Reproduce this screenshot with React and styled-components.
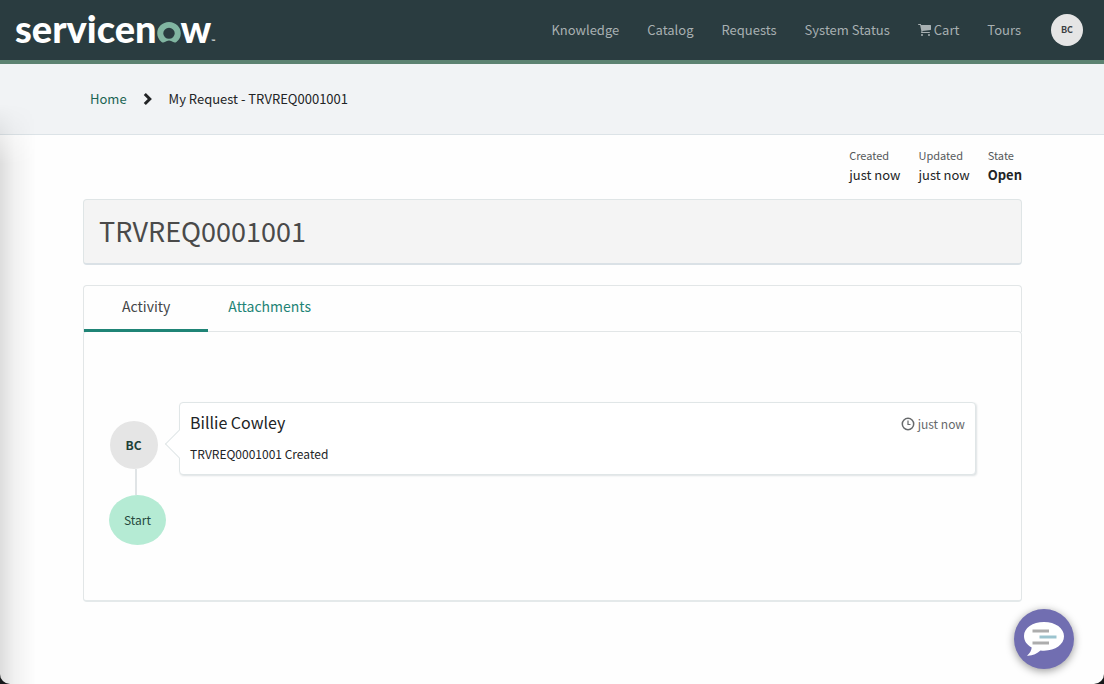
import React from "react";
import styled, { createGlobalStyle } from "styled-components";

const GlobalStyle = createGlobalStyle`
  *, *::before, *::after { box-sizing: border-box; }
  body {
    margin: 0;
    background: #17191b;
    color: #222426;
    font-family: "Source Sans Pro", "Noto Sans CJK SC", "Noto Sans", sans-serif;
    font-size: 13px;
    line-height: 20px;
  }
  h1, h2, p, dl, dd, ol { margin: 0; padding: 0; font-weight: 400; }
  button { font: inherit; border: 0; padding: 0; cursor: pointer; }
  a { text-decoration: none; }
`;

const Page = styled.div`
  position: relative;
  display: flex;
  flex-direction: column;
  min-height: 100vh;
  overflow: hidden;
  border-radius: 0 0 10px 10px;
  background: #fefefe;
`;

const EdgeShade = styled.div`
  position: absolute;
  top: 104px;
  bottom: 0;
  left: 0;
  width: 36px;
  pointer-events: none;
  background: linear-gradient(to right, rgba(0, 0, 0, 0.13), rgba(0, 0, 0, 0.05) 40%, transparent);
  mask-image: linear-gradient(to bottom, transparent, #000 60px);
`;

const Header = styled.header`
  display: flex;
  align-items: center;
  justify-content: space-between;
  height: 64px;
  padding: 0 21px 0 15px;
  background: #2a3c40;
  border-bottom: 4px solid #5c8271;
`;

const Logo = styled.a`
  display: flex;
  align-items: baseline;
  padding-bottom: 4px;
  color: #fff;
  font-family: Lato, sans-serif;
  font-size: 38px;
  font-weight: 900;
  line-height: 56px;
`;

const Trademark = styled.span`
  font-size: 5px;
  line-height: 8px;
`;

const Nav = styled.nav`
  display: flex;
  align-items: center;
  gap: 28px;
`;

const NavLink = styled.a`
  display: flex;
  align-items: center;
  gap: 3px;
  color: #a8b0b2;
`;

const Avatar = styled.span`
  display: flex;
  align-items: center;
  justify-content: center;
  flex: none;
  width: ${(p) => p.$size}px;
  height: ${(p) => p.$size}px;
  border-radius: 50%;
  background: #e5e5e5;
  color: ${(p) => p.$color};
  font-size: ${(p) => (p.$size > 40 ? 12 : 9)}px;
  font-weight: 700;
`;

const AvatarButton = styled.button`
  margin-left: 2px;
  border-radius: 50%;
  background: none;
`;

const BreadcrumbBar = styled.nav`
  padding: 25px 90px;
  background: #f1f3f5;
  border-bottom: 1px solid #dce3e7;
`;

const Breadcrumbs = styled.ol`
  display: flex;
  align-items: center;
  gap: 16px;
  list-style: none;

  li { display: flex; }
  a { color: #1b6453; }
`;

const Content = styled.main`
  display: flex;
  flex-direction: column;
  padding: 12px 82px 40px 83px;
`;

const Meta = styled.dl`
  display: flex;
  justify-content: flex-end;
  gap: 18px;
  margin-bottom: 14px;
`;

const MetaItem = styled.div`
  dt { padding-bottom: 2px; color: #55595b; font-size: 11px; line-height: 16px; }
  dd { font-size: 13px; line-height: 20px; font-weight: ${(p) => (p.$strong ? 700 : 400)}; }
`;

const TitleBox = styled.div`
  margin-bottom: 20px;
  padding: 11px 15px 13px;
  background: #f4f4f4;
  border: 1px solid #dfe5e6;
  border-bottom: 2px solid #dae1e6;
  border-radius: 4px;
`;

const Title = styled.h1`
  color: #4a4a4a;
  font-size: 27px;
  line-height: 39px;
`;

const Tabs = styled.div`
  display: flex;
  position: relative;
  border: 1px solid #e2e6e7;
  border-bottom: 0;
  border-radius: 4px 4px 0 0;
`;

const Tab = styled.button`
  height: 46px;
  padding: 0 ${(p) => (p.$active ? 38 : 20)}px 3px;
  background: none;
  border-bottom: 3px solid ${(p) => (p.$active ? "#1f8476" : "transparent")};
  color: ${(p) => (p.$active ? "#444648" : "#1f8476")};
  font-size: 14px;
`;

const Panel = styled.section`
  margin-top: -1px;
  padding: 70px 45px 55px 25px;
  border: 1px solid #e2e6e7;
  border-bottom: 2px solid #e4e9ea;
  border-radius: 4px;
`;

const Entry = styled.article`
  display: flex;
  gap: 13px;
`;

const Track = styled.div`
  display: flex;
  flex-direction: column;
  align-items: center;
  width: 57px;
  padding-top: 19px;
`;

const TrackAvatar = styled.div`
  padding-right: 8px;
`;

const Connector = styled.span`
  width: 2px;
  height: 26px;
  margin-right: 4px;
  background: #e0e4e6;
`;

const Start = styled.div`
  display: flex;
  align-items: center;
  justify-content: center;
  width: 57px;
  height: 50px;
  border-radius: 50%;
  background: #b5ebd4;
  color: #26483d;
  font-size: 12px;
`;

const Card = styled.div`
  position: relative;
  flex: 1;
  align-self: flex-start;
  padding: 9px 10px 10px;
  background: #fff;
  border: 1px solid #e0e6e7;
  border-radius: 4px;
  box-shadow: 1px 1px 2px rgba(30, 60, 70, 0.14);

  &::before {
    content: "";
    position: absolute;
    top: 31px;
    left: -11px;
    width: 20px;
    height: 20px;
    background: #fff;
    border-left: 1px solid #e0e6e7;
    border-bottom: 1px solid #e0e6e7;
    transform: rotate(45deg);
  }
`;

const CardHead = styled.div`
  position: relative;
  display: flex;
  justify-content: space-between;
  align-items: flex-end;
  margin-bottom: 12px;
`;

const Author = styled.h2`
  font-size: 16px;
  line-height: 20px;
`;

const Time = styled.span`
  display: flex;
  align-items: center;
  gap: 3px;
  color: #66696b;
  font-size: 12px;
  line-height: 16px;
`;

const Message = styled.p`
  position: relative;
  font-size: 12px;
  line-height: 20px;
`;

const ChatButton = styled.button`
  position: fixed;
  right: 30px;
  bottom: 15px;
  width: 60px;
  height: 60px;
  border-radius: 50%;
  background: #716eb1;
  box-shadow: 0 2px 8px rgba(0, 0, 0, 0.4);

  svg { display: block; }
`;

function LogoRing() {
  return (
    <svg width="24" height="21" viewBox="0 0 23 21" preserveAspectRatio="none" aria-hidden="true">
      <path
        fill="#81b5a1"
        d="M11.5 0C5.2 0 .2 5 .2 11.200c0 3.500 1.600 6.600 4.200 8.700.9.700 2.200.8 3.100.1a6.500 6.500 0 0 1 8 0c1 .7 2.200.6 3.100-.1a11 11 0 0 0 4.200-8.700C22.800 5 17.800 0 11.500 0Zm0 16.800a5.500 5.500 0 1 1 0-11 5.500 5.500 0 0 1 0 11Z"
      />
    </svg>
  );
}

function CartIcon() {
  return (
    <svg width="13" height="12" viewBox="0 0 1664 1536" fill="currentColor" aria-hidden="true">
      <path d="M640 1408a128 128 0 1 1-256 0 128 128 0 0 1 256 0ZM1536 1408a128 128 0 1 1-256 0 128 128 0 0 1 256 0ZM1664 192v512c0 32-25 60-57 64L563 890c5 22 13 47 13 70 0 23-14 45-24 64h920c35 0 64 29 64 64s-29 64-64 64H448c-35 0-64-29-64-64 0-31 45-106 61-137L268 128H64C29 128 0 99 0 64S29 0 64 0h256c67 0 69 80 79 128h1201c35 0 64 29 64 64Z" />
    </svg>
  );
}

function ChevronIcon() {
  return (
    <svg width="10" height="14" viewBox="0 0 10 14" fill="none" stroke="currentColor" strokeWidth="3" aria-hidden="true">
      <path d="M1.800 2L6.800 7L1.800 12" />
    </svg>
  );
}

function ClockIcon() {
  return (
    <svg width="14" height="14" viewBox="0 0 14 14" fill="none" stroke="#66696b" aria-hidden="true">
      <circle cx="7" cy="7" r="5.700" strokeWidth="1.500" />
      <path d="M7 3.500V7.500H9.500" strokeWidth="1.200" />
    </svg>
  );
}

function ChatIcon() {
  return (
    <svg width="60" height="60" viewBox="0 0 60 60" aria-hidden="true">
      <path
        fill="#fff"
        d="M30 13C18.500 13 10 19 10 27c0 5 3 9 7.700 11.500-.4 3.200-1.800 5.800-4.700 8.200 5.200.4 10-2 13.500-5.200 1.100.2 2.300.2 3.500.2 11.500 0 20-6.300 20-14.400S41.500 13 30 13Z"
      />
      <path stroke="#adadad" strokeWidth="3" d="M18.500 22H35M18.500 34H35" />
      <path stroke="#9cc4cf" strokeWidth="3" d="M25.500 28H42.500" />
    </svg>
  );
}

export default function App() {
  return (
    <>
      <GlobalStyle />
      <Page>
        <Header>
          <Logo href="#" aria-label="servicenow">
            servicen
            <LogoRing />w<Trademark>™</Trademark>
          </Logo>
          <Nav aria-label="Main">
            <NavLink href="#">Knowledge</NavLink>
            <NavLink href="#">Catalog</NavLink>
            <NavLink href="#">Requests</NavLink>
            <NavLink href="#">System Status</NavLink>
            <NavLink href="#">
              <CartIcon />
              Cart
            </NavLink>
            <NavLink href="#">Tours</NavLink>
            <AvatarButton type="button">
              <Avatar $size={32} $color="#3c4042">BC</Avatar>
            </AvatarButton>
          </Nav>
        </Header>
        <BreadcrumbBar aria-label="Breadcrumb">
          <Breadcrumbs>
            <li><a href="#">Home</a></li>
            <li aria-hidden="true"><ChevronIcon /></li>
            <li aria-current="page">My Request - TRVREQ0001001</li>
          </Breadcrumbs>
        </BreadcrumbBar>
        <Content>
          <Meta>
            <MetaItem><dt>Created</dt><dd>just now</dd></MetaItem>
            <MetaItem><dt>Updated</dt><dd>just now</dd></MetaItem>
            <MetaItem $strong><dt>State</dt><dd>Open</dd></MetaItem>
          </Meta>
          <TitleBox>
            <Title>TRVREQ0001001</Title>
          </TitleBox>
          <Tabs role="tablist">
            <Tab type="button" role="tab" id="tab-activity" aria-controls="panel-activity" aria-selected="true" $active>Activity</Tab>
            <Tab type="button" role="tab" aria-selected="false">Attachments</Tab>
          </Tabs>
          <Panel role="tabpanel" id="panel-activity" aria-labelledby="tab-activity">
            <Entry>
              <Track>
                <TrackAvatar>
                  <Avatar $size={48} $color="#1d4037">BC</Avatar>
                </TrackAvatar>
                <Connector />
                <Start>Start</Start>
              </Track>
              <Card>
                <CardHead>
                  <Author>Billie Cowley</Author>
                  <Time><ClockIcon />just now</Time>
                </CardHead>
                <Message>TRVREQ0001001 Created</Message>
              </Card>
            </Entry>
          </Panel>
        </Content>
        <EdgeShade />
        <ChatButton type="button" aria-label="Open chat">
          <ChatIcon />
        </ChatButton>
      </Page>
    </>
  );
}
